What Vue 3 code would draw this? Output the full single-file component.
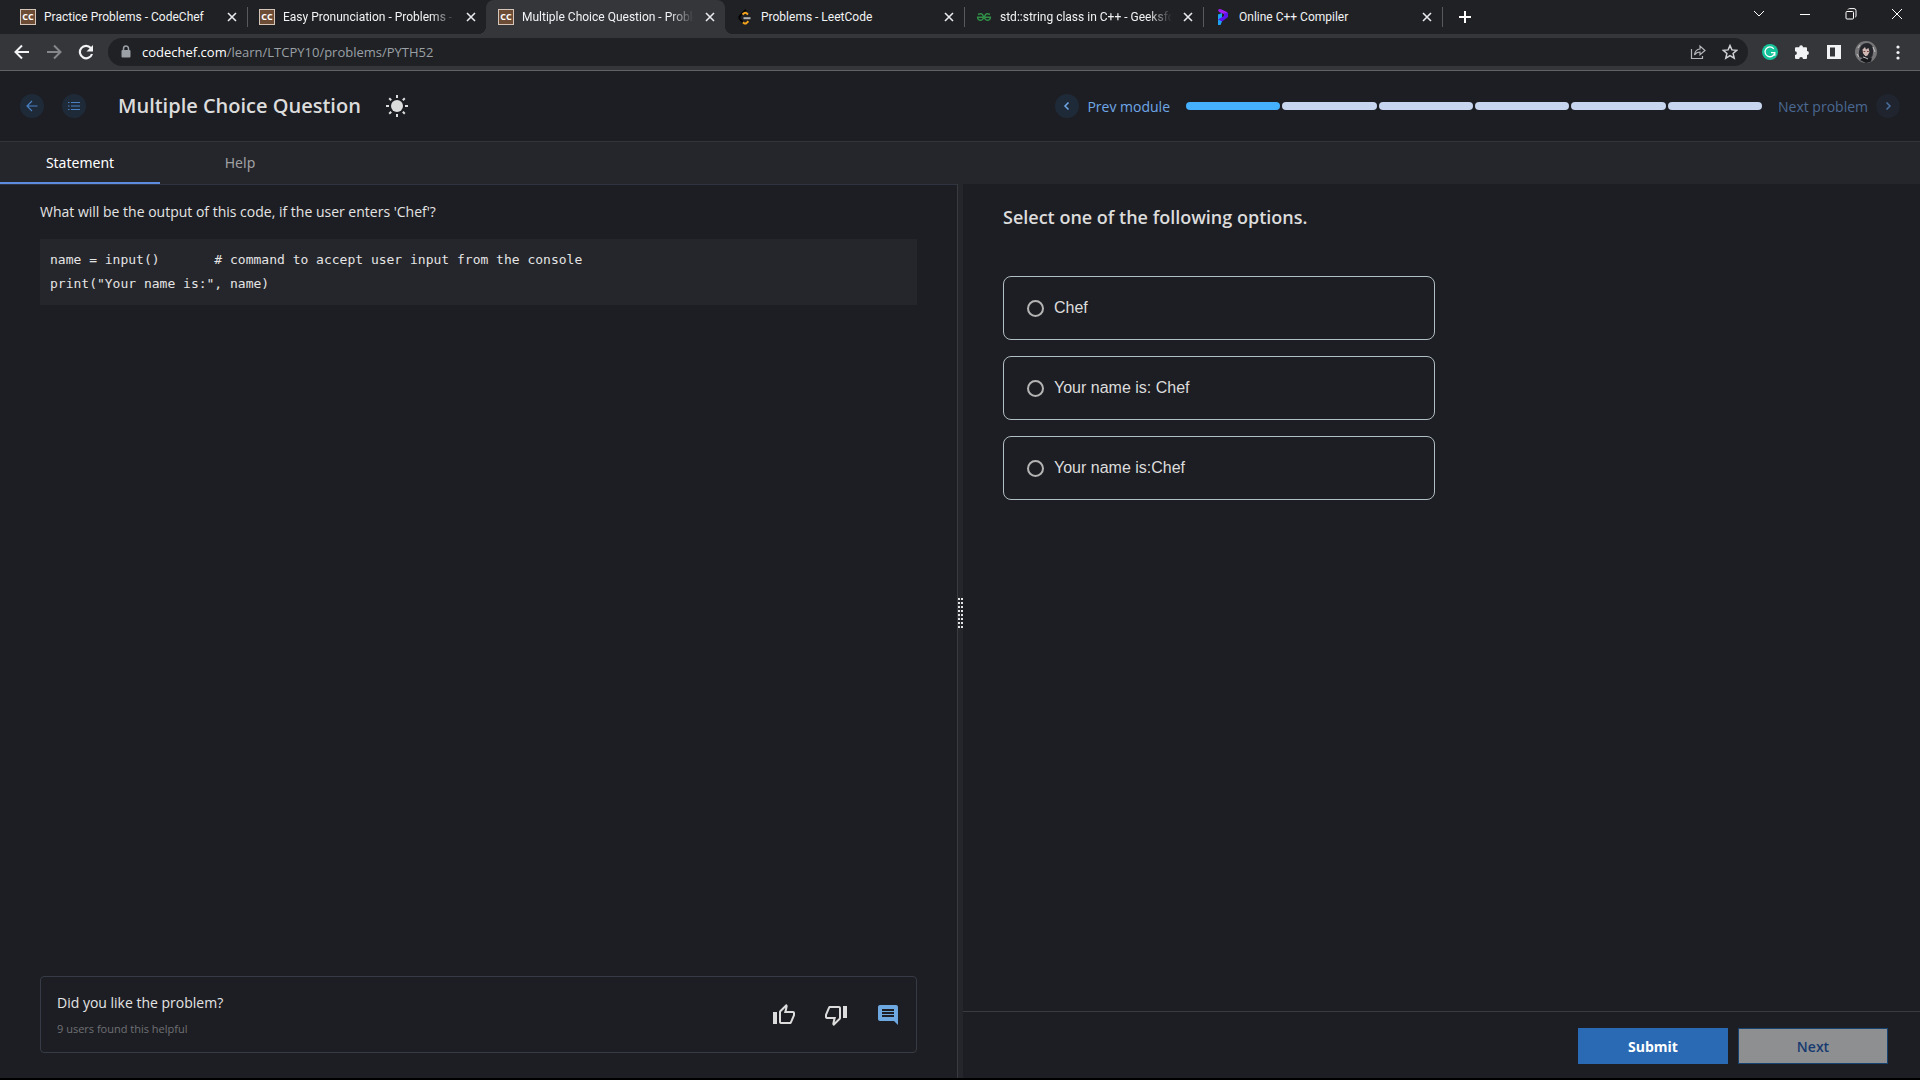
<script setup>
import { ref } from 'vue'

const tabs = [
  { title: 'Practice Problems - CodeChef', icon: 'cc', divider: true },
  { title: 'Easy Pronunciation - Problems - C', icon: 'cc', fade: true },
  { title: 'Multiple Choice Question - Proble', icon: 'cc', active: true, fade: true },
  { title: 'Problems - LeetCode', icon: 'leet', divider: true },
  { title: 'std::string class in C++ - Geeksfor', icon: 'gfg', divider: true, fade: true },
  { title: 'Online C++ Compiler', icon: 'programiz', divider: true },
]

const options = ['Chef', 'Your name is: Chef', 'Your name is:Chef']
const picked = ref(null)

const code = `name = input()       # command to accept user input from the console
print("Your name is:", name)`
</script>

<template>
  <div class="window">
    <header class="browser">
      <div class="strip">
        <div
          v-for="tab in tabs"
          :key="tab.title"
          class="tab"
          :class="{ active: tab.active, divider: tab.divider }"
        >
          <span v-if="tab.icon === 'cc'" class="favicon cc">CC</span>
          <svg v-else-if="tab.icon === 'leet'" class="favicon" viewBox="0 0 16 16" fill="none" stroke-width="2">
            <path d="M9 .8 3.200 6.600Q1.400 8.500 3.200 10.400L6 13.200" stroke="#050506" />
            <path d="M5.500 5.500 7 4.200q1.300-1 2.600.1l1.400 1.200M6 13.200l.8.8q1.300 1.100 2.600.1l2-1.900" stroke="#f5a51c" />
            <path d="M6.500 9.200H13.500" stroke="#b3b3b3" />
          </svg>
          <svg v-else-if="tab.icon === 'gfg'" class="favicon" viewBox="0 0 16 16" fill="none" stroke="#2f8d46" stroke-width="1.500">
            <path d="M2 5.500q3-1.700 4.600.2 1.500 1.800.6 4-1.700 2.500-4.200 1.200Q1.500 10 1.600 8.300h12.800q.1 1.700-1.400 2.600-2.500 1.300-4.200-1.200-.9-2.200.6-4 1.600-1.900 4.600-.2" />
          </svg>
          <svg v-else class="favicon" viewBox="0 0 16 16">
            <path d="M3 5.500 7 4v8.500L5.500 16H3z" fill="#1da1f2" />
            <path d="M3 1q1.200-1.200 3-.8L12 3l1 5-4-3-5-2z" fill="#a21cf5" />
            <path d="M9 4.500 13 3.500V8L7 12.500l-4-2L9 7z" fill="#5b13f2" />
          </svg>
          <span class="tab-title" :class="{ fade: tab.fade }">{{ tab.title }}</span>
          <button class="tab-close" aria-label="Close tab">
            <svg width="16" height="16" viewBox="0 0 16 16"><path d="m4 4 8 8M12 4l-8 8" stroke="#e8eaed" stroke-width="1.600" /></svg>
          </button>
        </div>
        <button class="new-tab" aria-label="New tab">
          <svg width="16" height="16" viewBox="0 0 16 16"><path d="M8 2v12M2 8h12" stroke="#fff" stroke-width="2" /></svg>
        </button>
        <div class="controls">
          <button aria-label="Search tabs"><svg width="12" height="12" viewBox="0 0 12 12"><path d="m1 3 5 5 5-5" /></svg></button>
          <button aria-label="Minimize"><svg width="12" height="12" viewBox="0 0 12 12"><path d="M1 6.500h10" /></svg></button>
          <button aria-label="Restore"><svg width="12" height="12" viewBox="0 0 12 12"><rect x="1" y="3.500" width="7.500" height="7.500" rx="1" /><path d="M3 1.500q.5-.9 1.500-.9H9q2 0 2 2V8q0 .8-.8 1.200" /></svg></button>
          <button aria-label="Close window"><svg width="12" height="12" viewBox="0 0 12 12"><path d="m1 1 10 10M11 1 1 11" /></svg></button>
        </div>
      </div>

      <div class="toolbar">
        <button aria-label="Back"><svg width="16" height="16" viewBox="0 0 16 16" fill="none" stroke="#f1f3f4" stroke-width="2"><path d="M15 8H2.500M8 1.500 1.500 8 8 14.500" /></svg></button>
        <button aria-label="Forward"><svg width="16" height="16" viewBox="0 0 16 16" fill="none" stroke="#85878a" stroke-width="2"><path d="M1 8h12.500M8 1.500 14.500 8 8 14.500" /></svg></button>
        <button aria-label="Reload"><svg width="16" height="16" viewBox="0 0 16 16"><path d="M12.800 4A6.200 6.200 0 1 0 14 10" fill="none" stroke="#f1f3f4" stroke-width="2.200" /><path d="M15 1v6.500H8.500z" fill="#f1f3f4" /></svg></button>
        <div class="omnibox">
          <svg class="lock" width="16" height="16" viewBox="0 0 16 16"><rect x="3.500" y="6" width="9" height="7.500" rx="1" fill="#9aa0a6" /><path d="M5.500 6.500V4.700a2.500 2.700 0 0 1 5 0v1.800" fill="none" stroke="#9aa0a6" stroke-width="1.500" /></svg>
          <div class="url" role="textbox" aria-label="Address" contenteditable="true" spellcheck="false"><span class="host">codechef.com</span><span>/learn/LTCPY10/problems/PYTH52</span></div>
          <button aria-label="Share"><svg width="16" height="16" viewBox="0 0 16 16" fill="none" stroke="#b4b7ba" stroke-width="1.200"><path d="M1.500 5v9.500h11V12" /><path d="M4.500 11Q5 5.500 10 5V2l5 4.500-5 4.300V8Q6.500 8 4.500 11z" /></svg></button>
          <button aria-label="Bookmark"><svg width="16" height="16" viewBox="0 0 16 16" fill="none" stroke="#d0d2d5" stroke-width="1.500"><path d="m8 1.500 1.900 4.400 4.800.4-3.600 3.200 1.100 4.700L8 11.700l-4.200 2.500 1.100-4.700-3.600-3.200 4.800-.4z" /></svg></button>
        </div>
        <button aria-label="Grammarly"><svg width="16" height="16" viewBox="0 0 16 16" fill="none"><circle cx="8" cy="8" r="8" fill="#15c39a" /><path d="M11.800 4.800A4.900 4.900 0 1 0 12.800 8.600H9M12.800 11.800V8.600" stroke="#fff" stroke-width="1.300" /></svg></button>
        <button aria-label="Extensions"><svg width="16" height="16" viewBox="0 0 16 16"><path d="M5.200 3.200a1.900 1.900 0 0 1 3.800 0h3q1 0 1 1v2.900a1.900 1.900 0 0 1 0 3.800V14q0 1-1 1H9a1.900 1.900 0 0 0-3.800 0H2q-1 0-1-1v-3a1.900 1.900 0 0 0 0-3.800V4.200q0-1 1-1z" fill="#f1f3f4" /></svg></button>
        <button aria-label="Side panel"><svg width="16" height="16" viewBox="0 0 16 16"><path fill-rule="evenodd" d="M1 1h14v14H1zM4 3.500v9h5v-9z" fill="#f1f3f4" /></svg></button>
        <button aria-label="Profile">
          <svg width="22" height="22" viewBox="0 0 22 22">
            <circle cx="11" cy="11" r="11" fill="#77777a" />
            <path d="M4 16Q3 5 9 2.500q6-2 8.500 3Q19 10 17.500 15l-3 3-7-1z" fill="#25262b" />
            <path d="M7.500 8.500 10 6l1 2.500L13.500 7l1 4-2 3.500-2 .8-2.500-3z" fill="#d0b9b5" />
            <path d="M8.500 10.500h1.800M12 10.500h1.800" stroke="#75433f" />
            <path d="m5 19 5-3.500 4 2 3-1-1 4-5 1.500z" fill="#18191c" />
            <path d="m8 16 3 1 2 1M3 7l2-3M18 6l2 5M2 13l2 3" stroke="#c4c3c4" fill="none" />
          </svg>
        </button>
        <button aria-label="Menu"><svg width="16" height="16" viewBox="0 0 16 16" fill="#f1f3f4"><circle cx="8" cy="3" r="1.600" /><circle cx="8" cy="8.500" r="1.600" /><circle cx="8" cy="14" r="1.600" /></svg></button>
      </div>
    </header>

    <div class="page-head">
      <button class="round" aria-label="Back to course"><svg width="12" height="12" viewBox="0 0 12 12" fill="none" stroke="#4a80c1" stroke-width="1.200"><path d="M11.500 6H1M6 1 1 6l5 5" /></svg></button>
      <button class="round list" aria-label="Problem list"><svg width="12" height="10" viewBox="0 0 12 10" stroke="#4a80c1" stroke-width="1.200"><path d="M0 1.500h1.500M3 1.500h9M0 5h1.500M3 5h9M0 8.500h1.500M3 8.500h9" /></svg></button>
      <h1>Multiple Choice Question</h1>
      <button class="theme" aria-label="Toggle theme">
        <svg width="24" height="24" viewBox="0 0 24 24"><circle cx="12" cy="12" r="6" fill="#dcdcdc" /><path d="M12 1v3M12 20v3M1 12h3M20 12h3M4.200 4.200l2 2M17.800 17.800l2 2M4.200 19.800l2-2M17.800 6.200l2-2" stroke="#dcdcdc" stroke-width="2" /></svg>
      </button>
      <a class="step prev" href="#prev">
        <span class="round"><svg width="8" height="8" viewBox="0 0 8 8" fill="none" stroke="#6fa8e8" stroke-width="1.500"><path d="M5.500.5 2 4l3.500 3.500" /></svg></span>
        Prev module
      </a>
      <div class="progress" role="img" aria-label="Step 1 of 6">
        <span v-for="n in 6" :key="n" :class="{ done: n === 1 }"></span>
      </div>
      <a class="step next" href="#next">
        Next problem
        <span class="round dim"><svg width="8" height="8" viewBox="0 0 8 8" fill="none" stroke="#4a6f9f" stroke-width="1.500"><path d="M2.500.5 6 4 2.500 7.500" /></svg></span>
      </a>
    </div>

    <nav class="page-tabs">
      <button class="current">Statement</button>
      <button>Help</button>
    </nav>

    <main class="panes">
      <section class="statement">
        <p>What will be the output of this code, if the user enters 'Chef'?</p>
        <pre>{{ code }}</pre>
        <div class="feedback">
          <div class="ask">
            <div class="question">Did you like the problem?</div>
            <div class="count">9 users found this helpful</div>
          </div>
          <button aria-label="Like"><svg width="24" height="24" viewBox="0 0 24 24" fill="#dcdcdc"><path d="M9 21h9c.83 0 1.540-.5 1.840-1.220l3.020-7.050c.09-.23.14-.47.14-.73v-2c0-1.100-.9-2-2-2h-6.310l.95-4.570.03-.32c0-.41-.17-.79-.44-1.060L14.170 1 7.580 7.590C7.220 7.950 7 8.450 7 9v10c0 1.100.9 2 2 2zM9 9l4.340-4.340L12 10h9v2l-3 7H9V9zM1 9h4v12H1z" /></svg></button>
          <button aria-label="Dislike"><svg width="24" height="24" viewBox="0 0 24 24" fill="#dcdcdc"><path d="M15 3H6c-.83 0-1.540.5-1.840 1.220l-3.020 7.050c-.09.23-.14.47-.14.73v2c0 1.100.9 2 2 2h6.310l-.95 4.570-.03.32c0 .41.17.79.44 1.060L9.830 23l6.590-6.590c.36-.36.58-.86.58-1.410V5c0-1.100-.9-2-2-2zm0 12-4.340 4.340L12 14H3v-2l3-7h9v10zM19 3h4v12h-4z" /></svg></button>
          <button aria-label="Comments"><svg width="24" height="24" viewBox="0 0 24 24" fill="#6ea8e0"><path d="M21.990 4c0-1.100-.89-2-1.990-2H4c-1.100 0-2 .9-2 2v12c0 1.100.9 2 2 2h14l4 4-.01-18zM18 14H6v-2h12v2zm0-3H6V9h12v2zm0-3H6V6h12v2z" /></svg></button>
        </div>
      </section>

      <div class="splitter" role="separator" aria-orientation="vertical">
        <span class="grip"><i v-for="n in 16" :key="n"></i></span>
      </div>

      <section class="answers">
        <form class="choices" @submit.prevent>
          <h2>Select one of the following options.</h2>
          <label v-for="option in options" :key="option" class="option">
            <input v-model="picked" type="radio" name="answer" :value="option" />
            <span>{{ option }}</span>
          </label>
        </form>
        <div class="actions">
          <button class="submit">Submit</button>
          <button class="skip">Next</button>
        </div>
      </section>
    </main>
  </div>
</template>

<style>
body {
  margin: 0;
  background: #000;
}
</style>

<style scoped>
* {
  box-sizing: border-box;
}

.window {
  display: flex;
  flex-direction: column;
  min-height: 100vh;
  border-bottom: 2px solid #000;
  background: #1d1e23;
  color: #e4e4e4;
  font-family: "Open Sans", "Noto Sans", sans-serif;
  font-size: 14px;
}

button {
  display: flex;
  align-items: center;
  justify-content: center;
  padding: 0;
  border: 0;
  background: none;
  color: inherit;
  font: inherit;
}

svg {
  display: block;
  flex: none;
}

/* Browser frame */
.browser {
  border-bottom: 1px solid #606266;
}

.strip {
  display: flex;
  height: 34px;
  padding-left: 8px;
  background: #202124;
}

.tab {
  position: relative;
  display: flex;
  align-items: center;
  flex: 0 1 239px;
  min-width: 0;
  gap: 8px;
  padding: 0 7px 0 12px;
  color: #f1f3f4;
  font-family: Roboto, "Open Sans", sans-serif;
  font-size: 12px;
}

.tab.active {
  border-radius: 8px 8px 0 0;
  background: #35363a;
}

.tab.active::before,
.tab.active::after {
  content: "";
  position: absolute;
  bottom: 0;
  width: 8px;
  height: 8px;
}

.tab.active::before {
  right: 100%;
  background: radial-gradient(circle at 0 0, transparent 8px, #35363a 8px);
}

.tab.active::after {
  left: 100%;
  background: radial-gradient(circle at 100% 0, transparent 8px, #35363a 8px);
}

.tab.divider::after {
  content: "";
  position: absolute;
  right: -1px;
  top: 7px;
  width: 1px;
  height: 20px;
  background: #57595d;
}

.favicon {
  flex: none;
  width: 16px;
  height: 16px;
}

.cc {
  border: 1px solid #d5c5b8;
  background: #6d4c36;
  color: #fff;
  font-family: "Open Sans", sans-serif;
  font-size: 9px;
  font-weight: 700;
  line-height: 14px;
  text-align: center;
}

.tab-title {
  flex: 1;
  min-width: 0;
  overflow: hidden;
  white-space: nowrap;
  line-height: 18px;
}

.tab-title.fade {
  mask-image: linear-gradient(to left, transparent, #000 24px);
}

.tab-close {
  width: 16px;
  height: 16px;
}

.new-tab {
  flex: none;
  width: 28px;
  margin: 0 9px;
}

.controls {
  display: flex;
  margin-left: auto;
  padding-bottom: 6px;
}

.controls button {
  width: 46px;
}

.controls svg {
  fill: none;
  stroke: #fff;
}

.toolbar {
  display: flex;
  align-items: center;
  height: 36px;
  padding: 0 6px;
  background: #35363a;
}

.toolbar button {
  flex: none;
  width: 32px;
  height: 28px;
}

.omnibox {
  display: flex;
  align-items: center;
  flex: 1;
  height: 28px;
  margin: 0 6px;
  padding: 0 2px 0 10px;
  border-radius: 14px;
  background: #202124;
}

.url {
  flex: 1;
  margin-left: 8px;
  color: #9aa0a6;
  font-size: 13px;
  line-height: 20px;
  outline: 0;
}

.host {
  color: #fff;
}

/* Problem header */
.page-head {
  display: flex;
  align-items: center;
  height: 71px;
  padding: 0 20px;
  border-bottom: 1px solid #33353a;
}

.round {
  display: flex;
  align-items: center;
  justify-content: center;
  flex: none;
  width: 24px;
  height: 24px;
  border-radius: 50%;
  background: #1f2a38;
}

.round.list {
  margin-left: 18px;
}

.round.dim {
  background: #1f242e;
}

h1 {
  margin: 0 0 0 32px;
  color: #dcdcdc;
  font-size: 20px;
  font-weight: 600;
  line-height: 28px;
}

.theme {
  margin: 0 auto 0 24px;
}

.step {
  display: flex;
  align-items: center;
  gap: 8px;
  color: #6fa8e8;
  text-decoration: none;
  white-space: nowrap;
}

.step.next {
  color: #4a6993;
}

.progress {
  display: flex;
  flex: none;
  gap: 2px;
  width: 30vw;
  margin: 0 16px;
}

.progress span {
  flex: 1;
  height: 8px;
  border-radius: 4px;
  background: #c8d5ee;
}

.progress .done {
  background: #45b0ff;
}

.page-tabs {
  display: flex;
  height: 42px;
  background: #25262b;
}

.page-tabs button {
  width: 160px;
  border-bottom: 2px solid transparent;
  color: #a0a0a3;
  font-family: "Noto Sans", "Open Sans", sans-serif;
}

.page-tabs .current {
  border-bottom-color: #5c8be0;
  color: #fff;
}

/* Split view */
.panes {
  display: grid;
  flex: 1;
  grid-template-columns: minmax(0, 1fr) 6px minmax(0, 1fr);
}

.statement {
  display: flex;
  flex-direction: column;
  padding: 17px 40px 25px;
  border-top: 1px solid #2f3440;
}

.statement p {
  margin: 0;
  line-height: 20px;
}

pre {
  margin: 17px 0 0;
  padding: 9px 10px;
  background: #25262b;
  font-family: "DejaVu Sans Mono", monospace;
  font-size: 13px;
  line-height: 24px;
}

.feedback {
  display: flex;
  align-items: center;
  gap: 28px;
  height: 77px;
  margin-top: auto;
  padding: 0 16px;
  border: 1px solid #363b45;
  border-radius: 4px;
}

.ask {
  flex: 1;
}

.question {
  line-height: 24px;
}

.count {
  padding-top: 4px;
  color: #6f7073;
  font-size: 11px;
  line-height: 20px;
}

.splitter {
  display: flex;
  align-items: center;
  justify-content: center;
  border-left: 1px solid #3a3b40;
  background: #25262b;
}

.grip {
  display: grid;
  flex: none;
  grid-template-columns: 2px 2px;
  gap: 2px 1px;
  padding-bottom: 36px;
}

.grip i {
  width: 2px;
  height: 2px;
  background: #e4e4e4;
}

.answers {
  display: flex;
  flex-direction: column;
}

.choices {
  flex: 1;
  padding: 21px 40px;
}

h2 {
  margin: 0 0 47px;
  color: #dcdcdc;
  font-size: 18px;
  font-weight: 600;
  line-height: 24px;
}

.option {
  display: flex;
  align-items: center;
  gap: 10px;
  width: 432px;
  max-width: 100%;
  height: 64px;
  margin-bottom: 16px;
  padding: 0 23px;
  border: 1px solid #b0bec5;
  border-radius: 8px;
  color: #dcdcdc;
  font-family: "Liberation Sans", Arial, sans-serif;
  font-size: 16px;
}

.option input {
  appearance: none;
  width: 17px;
  height: 17px;
  margin: 0;
  border: 2px solid #b4b4b4;
  border-radius: 50%;
}

.option input:checked {
  background: #45b0ff;
}

.actions {
  display: flex;
  justify-content: flex-end;
  gap: 10px;
  padding: 16px 32px 14px;
  border-top: 1px solid #3a3b3f;
}

.actions button {
  width: 150px;
  height: 36px;
}

.submit {
  background: #2a69b3;
  color: #fff;
  font-weight: 700;
}

.skip {
  border: 1px solid #174372;
  background: #8e8f91;
  color: #173b70;
  font-weight: 600;
}
</style>
